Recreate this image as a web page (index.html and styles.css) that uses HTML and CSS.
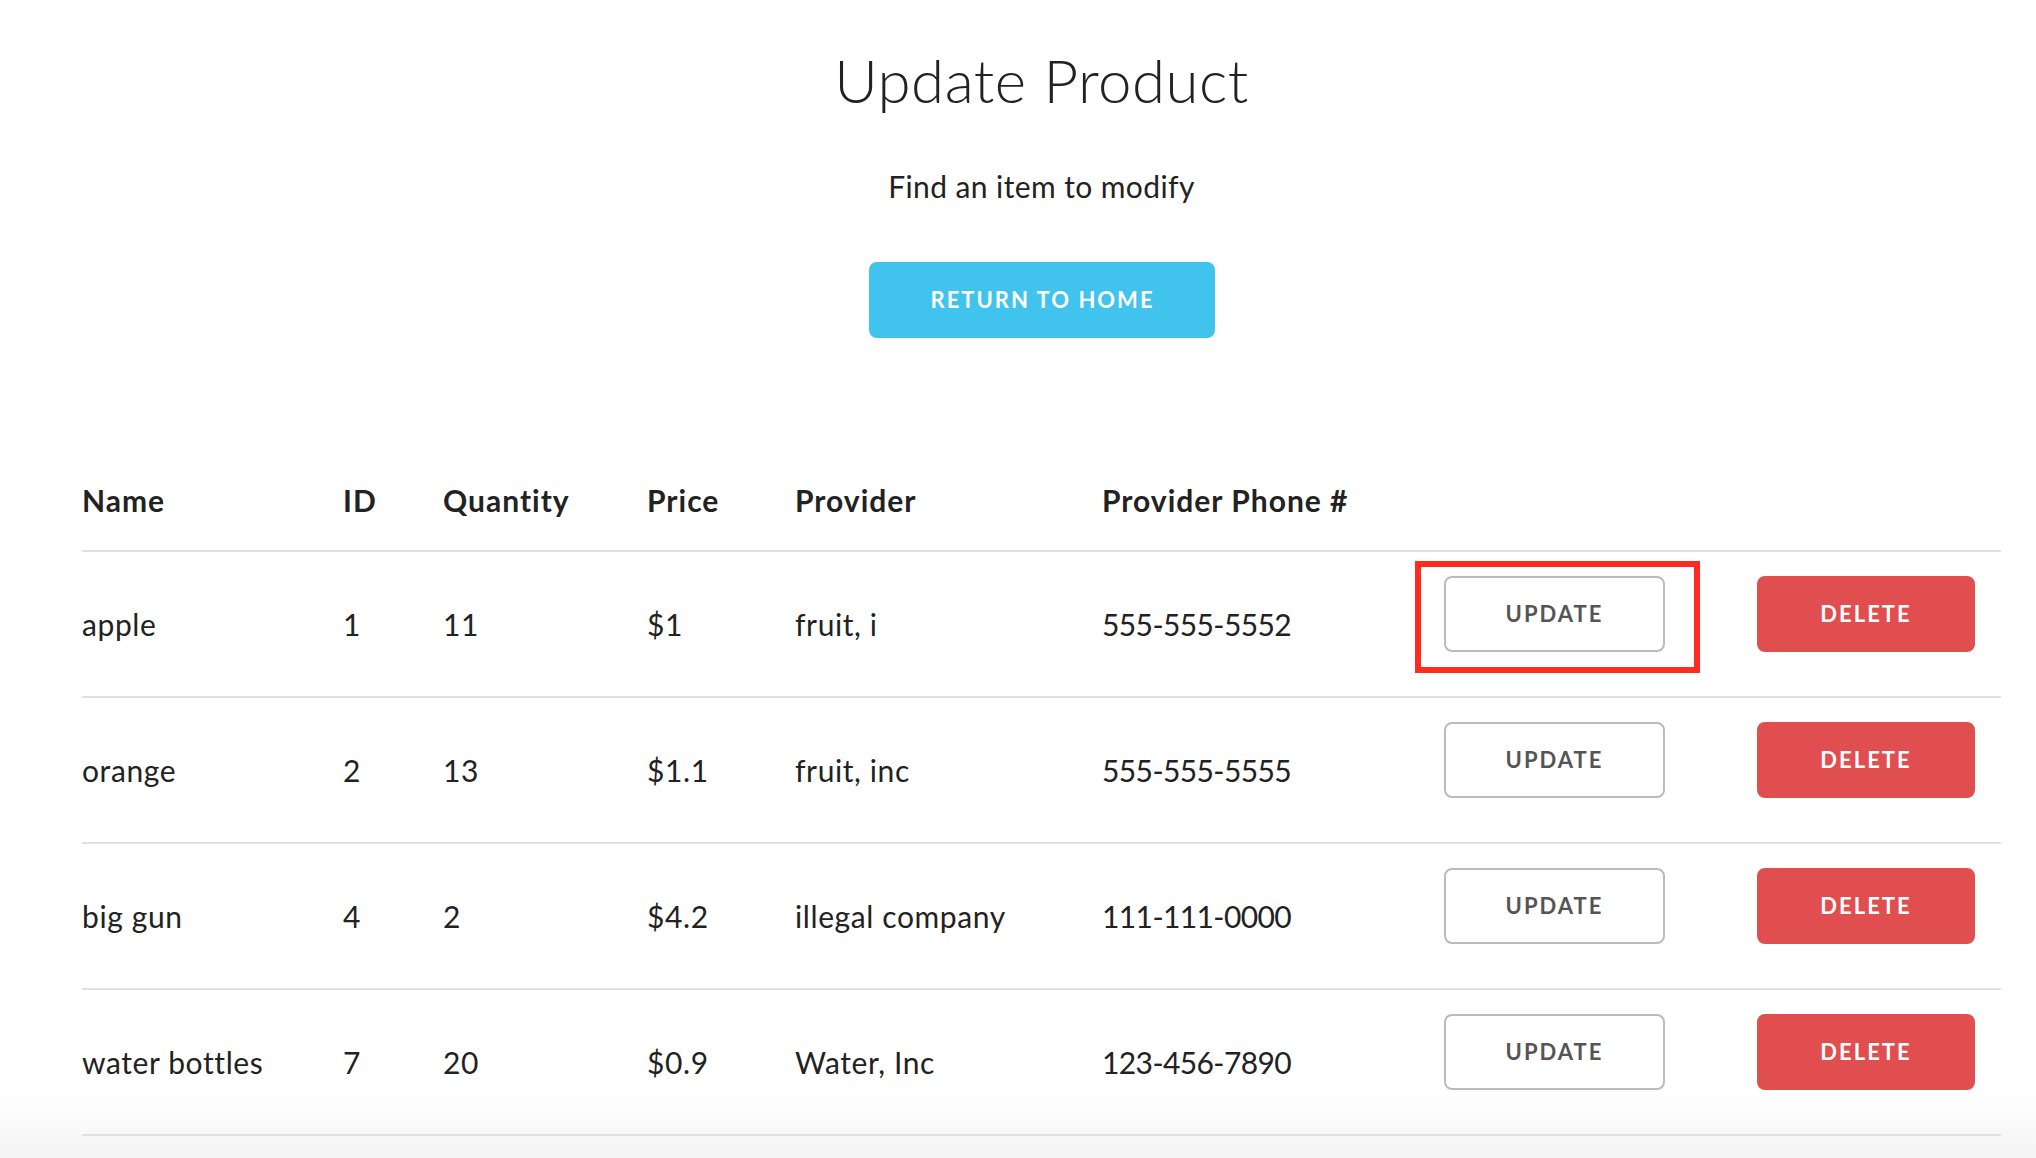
FILE: index.html
```html
<!DOCTYPE html>
<html lang="en">
<head>
<meta charset="utf-8">
<title>Update Product</title>
<link rel="stylesheet" href="styles.css">
</head>
<body>
<div class="page">
  <header class="intro">
    <h1 class="title">Update Product</h1>
    <p class="subtitle">Find an item to modify</p>
    <a class="btn btn-primary" href="#">Return to Home</a>
  </header>

  <table class="products">
    <thead>
      <tr>
        <th class="c1">Name</th>
        <th class="c2">ID</th>
        <th class="c3">Quantity</th>
        <th class="c4">Price</th>
        <th class="c5">Provider</th>
        <th class="c6">Provider Phone #</th>
        <th class="c7"></th>
        <th class="c8"></th>
      </tr>
    </thead>
    <tbody>
      <tr>
        <td>apple</td>
        <td>1</td>
        <td>11</td>
        <td>$1</td>
        <td>fruit, i</td>
        <td class="phone">555-555-5552</td>
        <td><span class="mark-wrap"><button class="btn">Update</button><span class="highlight"></span></span></td>
        <td><button class="btn btn-danger">Delete</button></td>
      </tr>
      <tr>
        <td>orange</td>
        <td>2</td>
        <td>13</td>
        <td>$1.1</td>
        <td>fruit, inc</td>
        <td class="phone">555-555-5555</td>
        <td><button class="btn">Update</button></td>
        <td><button class="btn btn-danger">Delete</button></td>
      </tr>
      <tr>
        <td>big gun</td>
        <td>4</td>
        <td>2</td>
        <td>$4.2</td>
        <td>illegal company</td>
        <td class="phone">111-111-0000</td>
        <td><button class="btn">Update</button></td>
        <td><button class="btn btn-danger">Delete</button></td>
      </tr>
      <tr>
        <td>water bottles</td>
        <td>7</td>
        <td>20</td>
        <td>$0.9</td>
        <td>Water, Inc</td>
        <td class="phone">123-456-7890</td>
        <td><button class="btn">Update</button></td>
        <td><button class="btn btn-danger">Delete</button></td>
      </tr>
    </tbody>
  </table>
</div>
</body>
</html>
```

FILE: styles.css
```css
html {
  min-height: 1158px;
  background: linear-gradient(to bottom, #ffffff 0, #ffffff 1092px, #f4f4f4 1158px);
}

body {
  margin: 0;
  font-family: "Lato", "Open Sans", sans-serif;
  font-size: 30px;
  line-height: 48px;
  font-weight: 400;
  color: #222222;
}

.page {
  width: 1919px;
  padding-left: 82px;
  padding-top: 44px;
}

.intro {
  display: flex;
  flex-direction: column;
  align-items: center;
}

.title {
  margin: 0;
  font-size: 60px;
  line-height: 72px;
  font-weight: 300;
  letter-spacing: 0.5px;
  color: #222222;
}

.subtitle {
  margin: 46px 0 0;
  font-size: 30px;
  line-height: 48px;
  font-weight: 400;
  letter-spacing: 0.4px;
}

.btn {
  display: inline-block;
  box-sizing: border-box;
  height: 76px;
  padding: 0 60px;
  margin: 0 0 20px;
  font-family: "Lato", "Open Sans", sans-serif;
  font-size: 22px;
  font-weight: 700;
  line-height: 72px;
  letter-spacing: 2px;
  text-transform: uppercase;
  text-decoration: none;
  text-align: center;
  white-space: nowrap;
  color: #555555;
  background: transparent;
  border: 2px solid #bbbbbb;
  border-radius: 8px;
  cursor: pointer;
}

.btn-primary {
  margin-top: 52px;
  width: 346px;
  color: #ffffff;
  background: #40c4ee;
  border-color: #40c4ee;
}

.btn-danger {
  width: 218px;
  padding: 0;
  color: #ffffff;
  background: #e14e50;
  border-color: #e14e50;
}

.products {
  margin-top: 96px;
  width: 1919px;
  border-collapse: collapse;
  table-layout: fixed;
}

.products th,
.products td {
  padding: 24px 30px;
  text-align: left;
  vertical-align: middle;
  border-bottom: 2px solid #e1e1e1;
}

.products th {
  padding-top: 22px;
  padding-bottom: 26px;
  font-weight: 700;
  letter-spacing: 1px;
}

.products td {
  letter-spacing: 0.6px;
}

.products td.phone {
  letter-spacing: -0.6px;
}

.products th:first-child,
.products td:first-child {
  padding-left: 0;
}

.products th:last-child,
.products td:last-child {
  padding-right: 0;
}

.products td .btn {
  width: 221px;
  padding: 0;
  letter-spacing: 2px;
}

.products td .btn-danger {
  width: 218px;
}

.c1 { width: 201px; }
.c2 { width: 40px; }
.c3 { width: 144px; }
.c4 { width: 88px; }
.c5 { width: 247px; }
.c6 { width: 282px; }
.c7 { width: 253px; }
.c8 { width: 244px; }

.mark-wrap {
  position: relative;
  display: inline-block;
  vertical-align: top;
}

.highlight {
  position: absolute;
  top: -15px;
  left: -29px;
  width: 285px;
  height: 112px;
  box-sizing: border-box;
  border: 6px solid #ff2b21;
  pointer-events: none;
}
```
